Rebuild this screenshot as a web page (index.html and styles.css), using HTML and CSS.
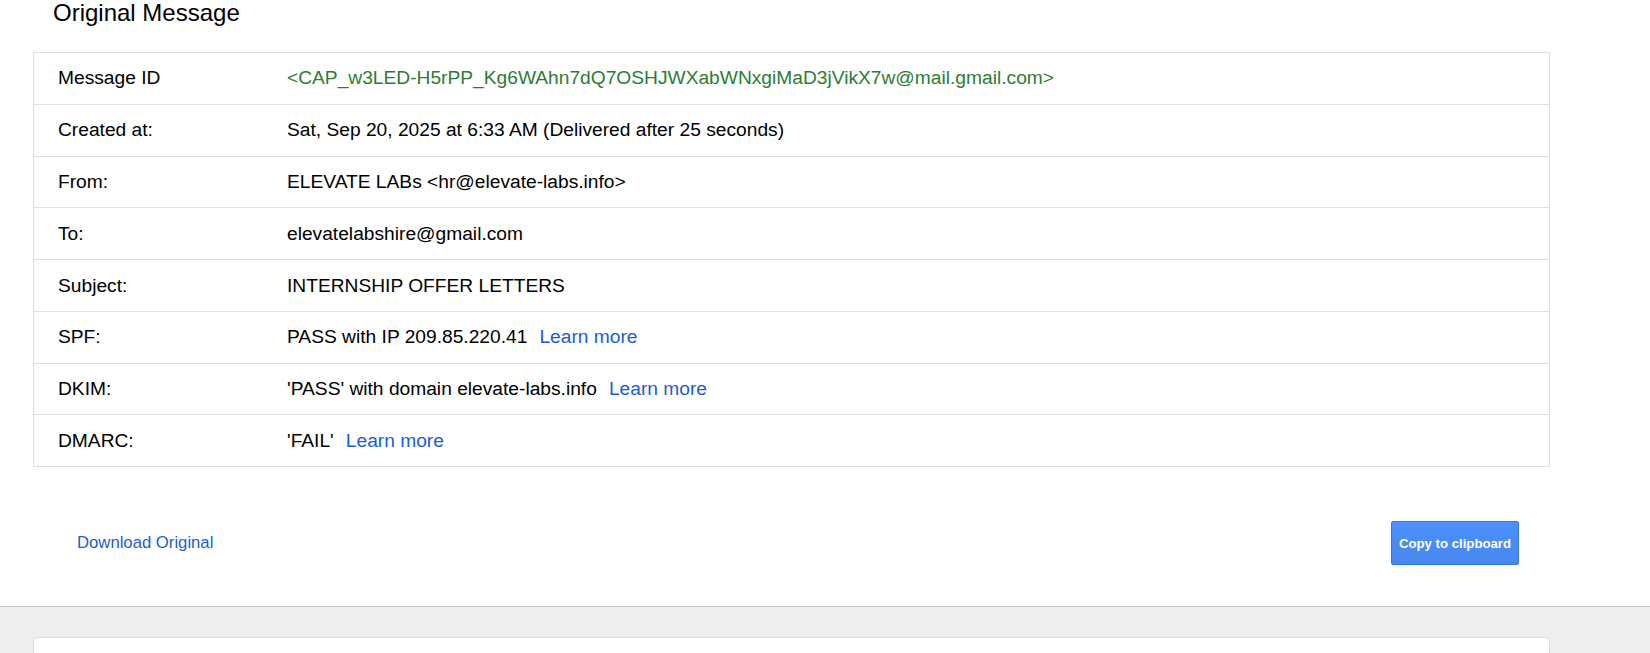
FILE: index.html
```html
<!DOCTYPE html>
<html lang="en">
<head>
<meta charset="utf-8">
<title>Original Message</title>
<link rel="stylesheet" href="styles.css">
</head>
<body>
<div class="top">
  <h1 class="title">Original Message</h1>
  <div class="details">
    <div class="row"><div class="label">Message ID</div><div class="value msgid">&lt;CAP_w3LED-H5rPP_Kg6WAhn7dQ7OSHJWXabWNxgiMaD3jVikX7w@mail.gmail.com&gt;</div></div>
    <div class="row"><div class="label">Created at:</div><div class="value">Sat, Sep 20, 2025 at 6:33 AM (Delivered after 25 seconds)</div></div>
    <div class="row"><div class="label">From:</div><div class="value">ELEVATE LABs &lt;hr@elevate-labs.info&gt;</div></div>
    <div class="row"><div class="label">To:</div><div class="value">elevatelabshire@gmail.com</div></div>
    <div class="row"><div class="label">Subject:</div><div class="value">INTERNSHIP OFFER LETTERS</div></div>
    <div class="row"><div class="label">SPF:</div><div class="value">PASS with IP 209.85.220.41<a class="learn" href="#">Learn more</a></div></div>
    <div class="row"><div class="label">DKIM:</div><div class="value">'PASS' with domain elevate-labs.info<a class="learn" href="#">Learn more</a></div></div>
    <div class="row"><div class="label">DMARC:</div><div class="value">'FAIL'<a class="learn" href="#">Learn more</a></div></div>
  </div>
  <div class="actions">
    <a class="download" href="#">Download Original</a>
    <button class="copy" type="button">Copy to clipboard</button>
  </div>
</div>
<div class="bottom">
  <div class="card"></div>
</div>
</body>
</html>
```
FILE: styles.css
```css
html, body {
  margin: 0;
  padding: 0;
}
body {
  font-family: "Liberation Sans", Arial, sans-serif;
  color: #222;
  background: #eeeeee;
  overflow: hidden;
}
.top {
  background: #fff;
  height: 607px;
  box-sizing: border-box;
  border-bottom: 1px solid #c6c6c6;
  padding-left: 33px;
}
.title {
  margin: 0 0 0 20px;
  font-size: 24px;
  font-weight: normal;
  line-height: 26.4px;
  color: #000;
}
.details {
  margin-top: 25.6px;
  width: 1517px;
  box-sizing: border-box;
  border: 1px solid #dedede;
}
.row {
  display: grid;
  grid-template-columns: 253px 1fr;
  font-size: 19.2px;
  line-height: 22px;
}
.row + .row {
  border-top: 1px solid #dedede;
}
.label {
  padding: 14.4px 0 14.4px 24px;
  color: #000;
}
.value {
  padding: 14.4px 0;
  color: #000;
}
.msgid {
  color: #2b7d33;
}
.learn {
  color: #1a5dd4;
  text-decoration: none;
  margin-left: 12px;
}
.actions {
  width: 1517px;
  box-sizing: border-box;
  margin-top: 54px;
  padding: 0 31px 0 44px;
  display: flex;
  justify-content: space-between;
  align-items: center;
}
.download {
  color: #1a5dd4;
  text-decoration: none;
  font-size: 16.7px;
}
.copy {
  height: 44px;
  width: 128px;
  padding: 0;
  border: 1px solid #3079ed;
  border-radius: 2px;
  background: linear-gradient(#4d90fe, #4787ed);
  color: #fff;
  font-family: "Liberation Sans", Arial, sans-serif;
  font-weight: bold;
  font-size: 13.2px;
}
.bottom {
  padding: 30px 0 0 33px;
}
.card {
  width: 1517px;
  height: 16px;
  box-sizing: border-box;
  background: #fff;
  border: 1px solid #dddddd;
  border-bottom: none;
  border-radius: 5px 5px 0 0;
}
```
